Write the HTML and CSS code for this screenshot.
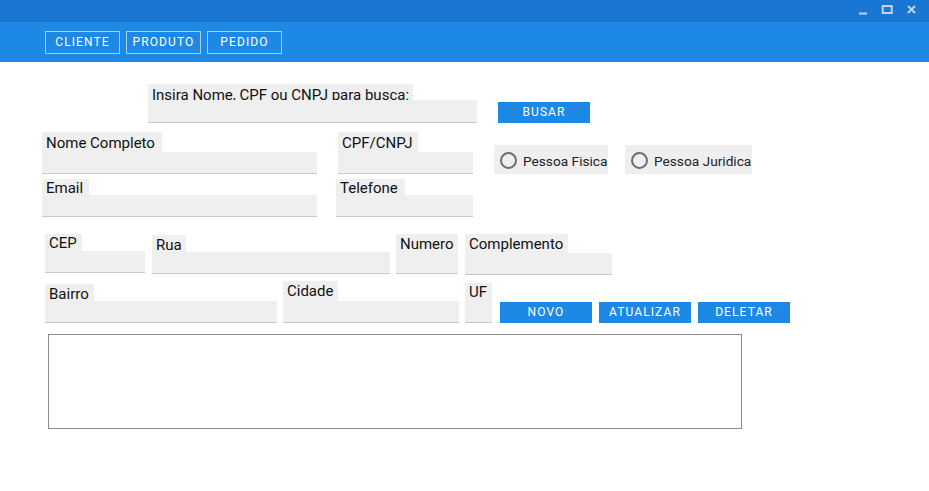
FILE: index.html
```
<!DOCTYPE html>
<html lang="pt">
<head>
<meta charset="utf-8">
<title>Cadastro de Cliente</title>
<link rel="stylesheet" href="styles.css">
</head>
<body>
<div class="window">
  <div class="titlebar">
    <svg class="winctl" width="62" height="22" viewBox="0 0 62 22">
      <rect x="3" y="12.5" width="8" height="2" fill="#bcd6f1"/>
      <rect x="26.7" y="6" width="9" height="7" fill="none" stroke="#bcd6f1" stroke-width="2"/>
      <path d="M52 6 L59 13 M59 6 L52 13" stroke="#bcd6f1" stroke-width="2" fill="none"/>
    </svg>
  </div>
  <div class="menubar">
    <button class="menu-btn">CLIENTE</button>
    <button class="menu-btn">PRODUTO</button>
    <button class="menu-btn">PEDIDO</button>
  </div>

  <div class="row row-search">
    <div class="field f-search">
      <div class="lbl">Insira Nome, CPF ou CNPJ para busca:</div>
      <div class="inp"></div>
    </div>
    <button class="btn btn-busar">BUSAR</button>
  </div>

  <div class="row row-b">
    <div class="field f-nome">
      <div class="lbl">Nome Completo</div>
      <div class="inp"></div>
    </div>
    <div class="field f-cpf">
      <div class="lbl">CPF/CNPJ</div>
      <div class="inp"></div>
    </div>
    <label class="radio r-fisica"><span class="circle"></span>Pessoa Fisica</label>
    <label class="radio r-juridica"><span class="circle"></span>Pessoa Juridica</label>
  </div>

  <div class="row row-c">
    <div class="field f-email">
      <div class="lbl">Email</div>
      <div class="inp"></div>
    </div>
    <div class="field f-tel">
      <div class="lbl">Telefone</div>
      <div class="inp"></div>
    </div>
  </div>

  <div class="row row-d">
    <div class="field f-cep">
      <div class="lbl">CEP</div>
      <div class="inp"></div>
    </div>
    <div class="field f-rua">
      <div class="lbl">Rua</div>
      <div class="inp"></div>
    </div>
    <div class="field f-num">
      <div class="lbl">Numero</div>
      <div class="inp"></div>
    </div>
    <div class="field f-comp">
      <div class="lbl">Complemento</div>
      <div class="inp"></div>
    </div>
  </div>

  <div class="row row-e">
    <div class="field f-bairro">
      <div class="lbl">Bairro</div>
      <div class="inp"></div>
    </div>
    <div class="field f-cid">
      <div class="lbl">Cidade</div>
      <div class="inp"></div>
    </div>
    <div class="field f-uf">
      <div class="lbl">UF</div>
      <div class="inp"></div>
    </div>
    <button class="btn btn-novo">NOVO</button>
    <button class="btn btn-atual">ATUALIZAR</button>
    <button class="btn btn-del">DELETAR</button>
  </div>

  <div class="row row-f">
    <div class="grid-box"></div>
  </div>
</div>
</body>
</html>
```
FILE: styles.css
```
* { box-sizing: border-box; }
html, body { margin: 0; padding: 0; background: #ffffff; }
body { font-family: Roboto, "Liberation Sans", sans-serif; color: #111; }
.window { width: 929px; height: 491px; overflow: hidden; background: #fff; }

.titlebar {
  height: 22px;
  background: #1976d2;
  display: flex;
  justify-content: flex-end;
  padding-right: 11px;
}
.winctl { display: block; }

.menubar {
  height: 40px;
  background: #1e88e5;
  display: flex;
  gap: 6px;
  padding: 9px 0 0 45px;
}
.menu-btn {
  width: 75px;
  height: 23px;
  border: 1px solid rgba(255,255,255,0.6);
  background: transparent;
  color: #fff;
  font-family: Roboto, "Liberation Sans", sans-serif;
  font-size: 12px;
  font-weight: 400;
  letter-spacing: 1.1px;
  padding: 0;
  line-height: 21px;
}

.row { display: flex; align-items: flex-start; }
.field { display: flex; flex-direction: column; flex: none; }
.lbl {
  align-self: flex-start;
  background: #efefef;
  font-size: 15px;
  line-height: 20px;
  padding-left: 4px;
  white-space: nowrap;
  color: #111;
}
.inp {
  background: #efefef;
  border-bottom: 1px solid #c9c9c9;
  height: 22px;
}

.btn {
  flex: none;
  width: 92px;
  height: 21px;
  background: #1e88e5;
  border: none;
  color: #fff;
  font-family: Roboto, "Liberation Sans", sans-serif;
  font-size: 12px;
  font-weight: 400;
  letter-spacing: 1.1px;
  padding: 0;
  line-height: 21px;
}

/* search row */
.row-search { margin-top: 22px; padding-left: 148px; }
.f-search { width: 329px; }
.f-search .lbl { width: 265px; height: 16px; padding-top: 1px; }
.f-search .inp { height: 23px; }
.btn-busar { margin-left: 21px; margin-top: 18px; }

/* row b */
.row-b { margin-top: 9px; padding-left: 42px; }
.f-nome { width: 275px; }
.f-nome .lbl { width: 120px; height: 20px; padding-top: 1px; }
.f-cpf { width: 135px; margin-left: 21px; }
.f-cpf .lbl { width: 80px; height: 20px; padding-top: 1px; }

.radio {
  flex: none;
  display: flex;
  align-items: center;
  height: 29px;
  margin-top: 13px;
  padding: 2px 0 0 6px;
  background: #efefef;
  font-size: 13.7px;
  color: #222;
  white-space: nowrap;
  overflow: hidden;
}
.r-fisica { width: 114px; margin-left: 21px; }
.r-juridica { width: 127px; margin-left: 17px; }
.circle {
  flex: none;
  width: 17px;
  height: 17px;
  border: 2px solid #6e6e6e;
  border-radius: 50%;
  margin-right: 6px;
}

/* row c */
.row-c { margin-top: 5px; padding-left: 42px; }
.f-email { width: 275px; }
.f-email .lbl { width: 47px; height: 16px; line-height: 18px; }
.f-tel { width: 137px; margin-left: 19px; }
.f-tel .lbl { width: 69px; height: 16px; line-height: 18px; }

/* row d */
.row-d { margin-top: 17px; padding-left: 45px; }
.f-cep { width: 100px; }
.f-cep .lbl { width: 37px; height: 17px; line-height: 18px; }
.f-rua { width: 238px; margin-left: 7px; margin-top: 1px; }
.f-rua .lbl { width: 34px; height: 17px; }
.f-num { width: 62px; margin-left: 6px; }
.f-num .lbl { width: 62px; height: 18px; }
.f-comp { width: 147px; margin-left: 7px; }
.f-comp .lbl { width: 103px; height: 19px; }

/* row e */
.row-e { margin-top: 6px; padding-left: 45px; }
.f-bairro { width: 232px; margin-top: 3px; }
.f-bairro .lbl { width: 49px; height: 17px; }
.f-cid { width: 176px; margin-left: 6px; }
.f-cid .lbl { width: 55px; height: 20px; }
.f-uf { width: 27px; margin-left: 6px; margin-top: 2px; }
.f-uf .lbl { width: 27px; height: 18px; line-height: 18px; }
.btn-novo { margin-left: 8px; margin-top: 21px; }
.btn-atual { margin-left: 7px; margin-top: 21px; }
.btn-del { margin-left: 7px; margin-top: 21px; }

/* list box */
.row-f { margin-top: 11px; padding-left: 48px; }
.grid-box {
  width: 694px;
  height: 95px;
  border: 1px solid #8c8c8c;
  background: #fff;
}
```
